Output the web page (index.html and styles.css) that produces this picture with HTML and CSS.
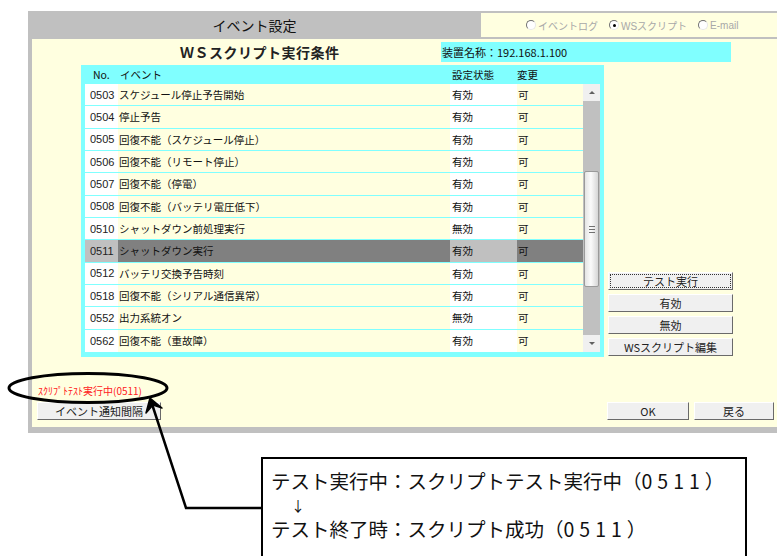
FILE: index.html
```html
<!DOCTYPE html>
<html lang="ja">
<head>
  <meta charset="UTF-8">
  <title>イベント設定</title>
  <link rel="stylesheet" href="styles.css">
</head>
<body>
  <div class="window">
    <div class="titlebar">
      <div class="title">イベント設定</div>
      <div class="modes">
        <span class="mode"><span class="radio"></span>イベントログ</span>
        <span class="mode"><span class="radio on"></span>WSスクリプト</span>
        <span class="mode"><span class="radio"></span>E-mail</span>
      </div>
    </div>
    <div class="content">
      <div class="head">
        <div class="subtitle">ＷＳスクリプト実行条件</div>
        <div class="device">装置名称：192.168.1.100</div>
      </div>
      <div class="main">
        <div class="list">
          <div class="list-head">
            <span class="c-no">No.</span>
            <span class="c-ev">イベント</span>
            <span class="c-st">設定状態</span>
            <span class="c-ch">変更</span>
          </div>
          <div class="list-body">
            <div class="rows">
              <div class="row"><span class="c-no">0503</span><span class="c-ev">スケジュール停止予告開始</span><span class="c-st">有効</span><span class="c-ch">可</span></div>
              <div class="row"><span class="c-no">0504</span><span class="c-ev">停止予告</span><span class="c-st">有効</span><span class="c-ch">可</span></div>
              <div class="row"><span class="c-no">0505</span><span class="c-ev">回復不能（スケジュール停止）</span><span class="c-st">有効</span><span class="c-ch">可</span></div>
              <div class="row"><span class="c-no">0506</span><span class="c-ev">回復不能（リモート停止）</span><span class="c-st">有効</span><span class="c-ch">可</span></div>
              <div class="row"><span class="c-no">0507</span><span class="c-ev">回復不能（停電）</span><span class="c-st">有効</span><span class="c-ch">可</span></div>
              <div class="row"><span class="c-no">0508</span><span class="c-ev">回復不能（バッテリ電圧低下）</span><span class="c-st">有効</span><span class="c-ch">可</span></div>
              <div class="row"><span class="c-no">0510</span><span class="c-ev">シャットダウン前処理実行</span><span class="c-st">無効</span><span class="c-ch">可</span></div>
              <div class="row selected"><span class="c-no">0511</span><span class="c-ev">シャットダウン実行</span><span class="c-st">有効</span><span class="c-ch">可</span></div>
              <div class="row"><span class="c-no">0512</span><span class="c-ev">バッテリ交換予告時刻</span><span class="c-st">有効</span><span class="c-ch">可</span></div>
              <div class="row"><span class="c-no">0518</span><span class="c-ev">回復不能（シリアル通信異常）</span><span class="c-st">有効</span><span class="c-ch">可</span></div>
              <div class="row"><span class="c-no">0552</span><span class="c-ev">出力系統オン</span><span class="c-st">無効</span><span class="c-ch">可</span></div>
              <div class="row"><span class="c-no">0562</span><span class="c-ev">回復不能（重故障）</span><span class="c-st">有効</span><span class="c-ch">可</span></div>
            </div>
            <div class="scrollbar">
              <div class="sb-btn"><span class="tri-up"></span></div>
              <div class="sb-track top"></div>
              <div class="sb-thumb"><span class="grip"></span></div>
              <div class="sb-track"></div>
              <div class="sb-btn"><span class="tri-down"></span></div>
            </div>
          </div>
        </div>
        <div class="side">
          <button class="btn focused">テスト実行</button>
          <button class="btn">有効</button>
          <button class="btn">無効</button>
          <button class="btn">WSスクリプト編集</button>
        </div>
      </div>
      <div class="foot">
        <div class="foot-left">
          <div class="status">ｽｸﾘﾌﾟﾄﾃｽﾄ実行中(0511)</div>
          <button class="btn interval">イベント通知間隔</button>
        </div>
        <div class="foot-right">
          <button class="btn ok">OK</button>
          <button class="btn back">戻る</button>
        </div>
      </div>
    </div>
  </div>

  <!-- annotation callout -->
  <svg class="callout" width="777" height="556" viewBox="0 0 777 556">
    <ellipse cx="88" cy="388" rx="79" ry="14.5" fill="none" stroke="#000" stroke-width="3"/>
    <polyline points="152,404 186,508 262,508" fill="none" stroke="#000" stroke-width="2.5"/>
    <path d="M150 398 L162 408 L153 405 L146 413 Z" fill="#000" stroke="#000" stroke-width="1.5" stroke-linejoin="round"/>
  </svg>
  <div class="note">
    <div>テスト実行中：スクリプトテスト実行中（<span class="num">0511</span>）</div>
    <div class="down">↓</div>
    <div>テスト終了時：スクリプト成功（<span class="num">0511</span>）</div>
  </div>
</body>
</html>
```

FILE: styles.css
```css
body { margin: 0; width: 777px; height: 556px; overflow: hidden; position: relative; background: #fff; font-family: "Noto Sans CJK JP", sans-serif; color: #111; }
button { font-family: inherit; }

.window { margin: 11px 0 0 28px; width: 760px; background: #c0c0c0; padding-bottom: 6px; }
.titlebar { display: flex; height: 28px; }
.title { width: 453px; text-align: center; line-height: 28px; font-size: 14px; }
.modes { flex: 1; margin: 2px 0; background: #ffffe0; display: flex; align-items: center; gap: 11px; padding-left: 45px; font-family: "Liberation Sans", "Noto Sans CJK JP", sans-serif; font-size: 10px; color: #a8a8a8; }
.mode { display: flex; align-items: center; }
.radio { width: 8px; height: 8px; border-radius: 50%; border: 1px solid; border-color: #707070 #e8e8e8 #e8e8e8 #707070; background: #fff; margin-right: 2px; position: relative; }
.radio.on::after { content: ""; position: absolute; left: 2.5px; top: 2.5px; width: 3px; height: 3px; border-radius: 50%; background: #000; }

.content { margin-left: 4px; height: 388px; background: #ffffe0; padding-top: 3px; box-sizing: border-box; }
.head { display: flex; height: 20px; }
.subtitle { width: 409px; padding-left: 148px; box-sizing: border-box; font-size: 14px; font-weight: bold; letter-spacing: 0.5px; line-height: 20px; color: #222; }
.device { width: 290px; background: #80ffff; font-size: 11px; line-height: 20px; padding-left: 1px; box-sizing: border-box; }

.main { display: flex; align-items: flex-end; gap: 4px; margin: 3px 0 0 49px; }
.list { width: 523px; background: #80ffff; padding: 0 4px 5px; box-sizing: border-box; font-size: 10.5px; }
.list-head { display: grid; grid-template-columns: 33px 332px 67px 66px; height: 19px; align-items: center; }
.list-head .c-no { padding-left: 8px; }
.list-head .c-ev, .list-head .c-st { padding-left: 2px; }
.list-body { display: flex; }
.rows { display: grid; grid-template-rows: repeat(12, 1fr); height: 268px; width: 498px; }
.row { display: grid; grid-template-columns: 33px 332px 67px 66px; border-bottom: 1px solid #80ffff; }
.row:last-child { border-bottom: 0; }
.row span { display: flex; align-items: center; }
.row .c-no { background: #fff; padding-left: 5px; font-family: "Liberation Sans", sans-serif; font-size: 11px; color: #222; }
.row .c-ev { background: #ffffe0; padding-left: 1px; }
.row .c-st { background: #fff; padding-left: 2px; }
.row .c-ch { background: #ffffe0; padding-left: 1px; }
.row.selected .c-no, .row.selected .c-st { background: #c0c0c0; }
.row.selected .c-ev, .row.selected .c-ch { background: #808080; }

.scrollbar { width: 17px; height: 268px; display: flex; flex-direction: column; background: #c0c0c0; }
.sb-btn { height: 17px; background: #f0f0f0; display: flex; align-items: center; justify-content: center; }
.sb-track { height: 48px; }
.sb-track.top { height: 70px; }
.sb-thumb { height: 116px; margin: 0 1px; box-sizing: border-box; border: 1px solid #9a9a9a; border-radius: 2px; background: linear-gradient(to right, #e4e4e4, #fbfbfb 45%, #d6d6d6); display: flex; align-items: center; justify-content: center; }
.grip { width: 6px; height: 5px; border-top: 1px solid #707070; border-bottom: 1px solid #707070; position: relative; }
.grip::after { content: ""; position: absolute; left: 0; right: 0; top: 2px; border-top: 1px solid #707070; }
.tri-up { border: 3px solid transparent; border-top: 0; border-bottom: 3px solid #606060; }
.tri-down { border: 3px solid transparent; border-bottom: 0; border-top: 3px solid #606060; }

.side { display: flex; flex-direction: column; gap: 4px; padding-bottom: 1px; }
.btn { display: block; height: 18px; padding: 0; background: #f0f0f0; border: 1px solid; border-color: #fff #6a6a6a #6a6a6a #fff; font-size: 11px; color: #222; line-height: 16px; }
.side .btn { width: 125px; }
.btn.focused { outline: 1px dotted #333; outline-offset: -3px; }

.foot { display: flex; justify-content: space-between; align-items: flex-end; margin-top: 26px; padding: 0 14px 0 5px; }
.status { color: #ff2020; font-size: 10px; line-height: 15px; padding-left: 1px; margin-bottom: 4px; }
.interval { width: 124px; }
.foot-right { display: flex; gap: 5px; }
.ok { width: 82px; }
.back { width: 80px; }

.callout { position: absolute; left: 0; top: 0; pointer-events: none; }
.note { position: absolute; left: 261px; top: 457px; width: 466px; height: 120px; border: 2.5px solid #000; padding: 10px 8px; font-size: 19.5px; line-height: 24px; color: #111; background: #fff; }
.note .num { font-size: 19.5px; letter-spacing: 5px; }
.note .down { font-size: 14px; padding-left: 20px; }
```
